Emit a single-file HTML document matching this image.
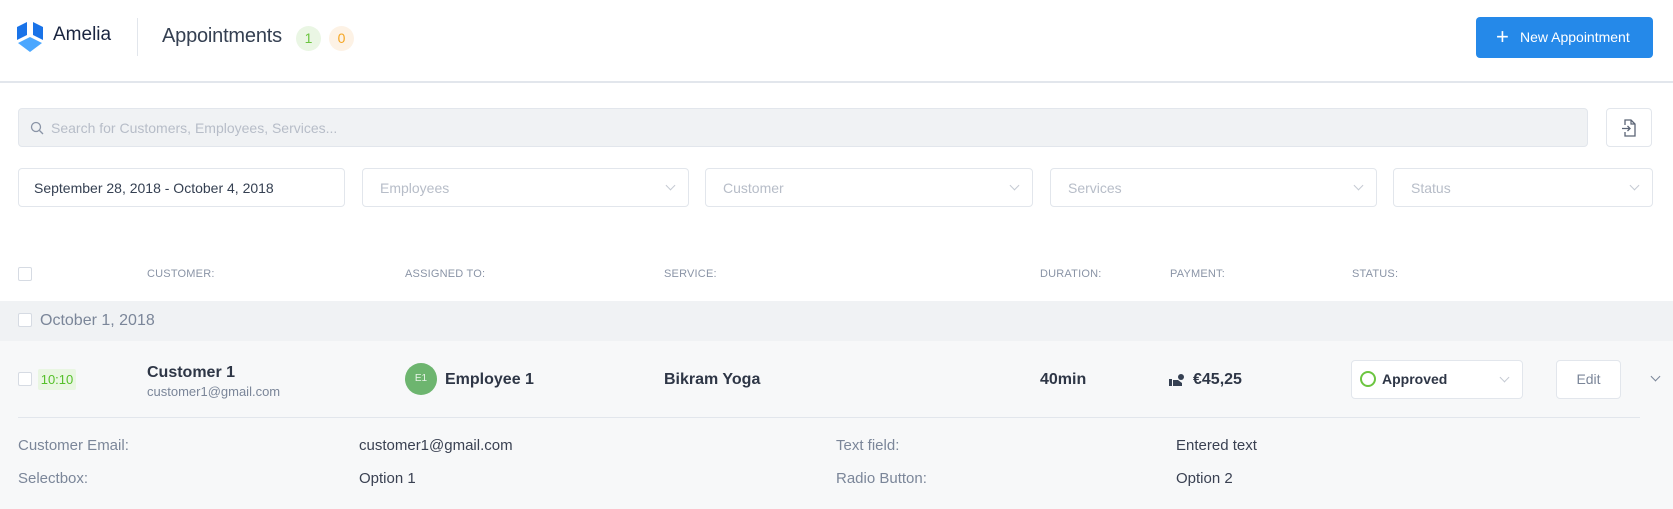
<!DOCTYPE html>
<html><head><meta charset="utf-8"><style>
*{box-sizing:border-box;margin:0;padding:0}
body{width:1673px;height:509px;overflow:hidden;background:#fff;font-family:"Liberation Sans",Arial,sans-serif;position:relative;color:#354052}
.a{position:absolute}
.box{position:absolute;border:1px solid #e2e6ec;border-radius:4px;background:#fff;height:39px;top:168px}
.ph{position:absolute;left:17px;top:11px;font-size:14px;color:#b7bdc8}
.chev{position:absolute;right:14px;top:13px;width:7px;height:7px;border-right:1px solid #c5cad3;border-bottom:1px solid #c5cad3;transform:rotate(45deg)}
.th{position:absolute;top:268px;font-size:11px;color:#8a94a6;letter-spacing:.2px}
.cb{position:absolute;width:14px;height:14px;border:1px solid #d6dbe3;border-radius:2px;background:#fff}
.lab{position:absolute;font-size:15px;color:#7b8699}
.val{position:absolute;font-size:15px;color:#3a4152}
</style></head><body>
<svg class="a" style="left:17px;top:22px" width="26" height="31" viewBox="0 0 26 31">
<path d="M0 5 L10 0 L10 13 L0 18 Z" fill="#1a73e8"/><path d="M26 5 L16 0 L16 13 L26 18 Z" fill="#1a73e8"/>
<path d="M1 21 L13 15 L25 21 L13 30 Z" fill="#4aa7ff"/></svg>
<div class="a" style="left:53px;top:24px;font-size:19px;color:#1a2540">Amelia</div>
<div class="a" style="left:137px;top:18px;width:1px;height:38px;background:#e2e6ec"></div>
<div class="a" style="left:162px;top:25px;font-size:20px;color:#354052;letter-spacing:-0.2px">Appointments</div>
<div class="a" style="left:296px;top:26px;width:25px;height:25px;border-radius:50%;background:#eaf6e4;color:#6cc540;font-size:14px;text-align:center;line-height:25px">1</div>
<div class="a" style="left:329px;top:26px;width:25px;height:25px;border-radius:50%;background:#fdf2e5;color:#f5a623;font-size:14px;text-align:center;line-height:25px">0</div>
<div class="a" style="left:1476px;top:17px;width:177px;height:41px;border-radius:4px;background:#2589e9;color:#fff;font-size:14px;line-height:41px"><span style="position:absolute;left:20px;top:-1px;font-size:22px;font-weight:300">+</span><span style="position:absolute;left:44px">New Appointment</span></div>
<div class="a" style="left:0;top:81px;width:1673px;height:2px;background:#e2e6ec"></div>
<div class="a" style="left:18px;top:108px;width:1570px;height:39px;background:#f0f2f4;border:1px solid #e2e6ec;border-radius:4px">
<svg class="a" style="left:11px;top:12px" width="14" height="14" viewBox="0 0 14 14"><circle cx="6" cy="6" r="4.5" fill="none" stroke="#8a94a6" stroke-width="1.3"/><path d="M9.5 9.5 L13 13" stroke="#8a94a6" stroke-width="1.3"/></svg>
<span class="a" style="left:32px;top:11px;font-size:14px;color:#b7bdc8">Search for Customers, Employees, Services...</span></div>
<div class="a" style="left:1606px;top:108px;width:46px;height:39px;border:1px solid #e2e6ec;border-radius:4px;background:#fff">
<svg class="a" style="left:14px;top:10px" width="16" height="18" viewBox="0 0 16 18"><path d="M4 6 V1 H10 L14 5 V17 H4 V13" fill="none" stroke="#5b6475" stroke-width="1.3"/><path d="M10 1 V5 H14" fill="none" stroke="#5b6475" stroke-width="1.2"/><path d="M1 9.5 H9 M6.5 7 L9 9.5 L6.5 12" fill="none" stroke="#5b6475" stroke-width="1.3"/></svg></div>
<div class="box" style="left:18px;width:327px"><span class="ph" style="left:15px;color:#354052">September 28, 2018 - October 4, 2018</span></div>
<div class="box" style="left:362px;width:327px"><span class="ph">Employees</span><i class="chev"></i></div>
<div class="box" style="left:705px;width:328px"><span class="ph">Customer</span><i class="chev"></i></div>
<div class="box" style="left:1050px;width:327px"><span class="ph">Services</span><i class="chev"></i></div>
<div class="box" style="left:1393px;width:260px"><span class="ph">Status</span><i class="chev"></i></div>
<div class="cb" style="left:18px;top:267px"></div>
<div class="th" style="left:147px">CUSTOMER:</div>
<div class="th" style="left:405px">ASSIGNED TO:</div>
<div class="th" style="left:664px">SERVICE:</div>
<div class="th" style="left:1040px">DURATION:</div>
<div class="th" style="left:1170px">PAYMENT:</div>
<div class="th" style="left:1352px">STATUS:</div>
<div class="a" style="left:0;top:301px;width:1673px;height:40px;background:#f0f2f4"></div>
<div class="cb" style="left:18px;top:313px"></div>
<div class="a" style="left:40px;top:312px;font-size:16px;color:#7b8699">October 1, 2018</div>
<div class="a" style="left:0;top:341px;width:1673px;height:168px;background:#f7f8f9"></div>
<div class="cb" style="left:18px;top:372px"></div>
<div class="a" style="left:38px;top:369px;width:38px;height:21px;background:#e9f6e2;border-radius:2px;color:#55c02a;font-size:13px;line-height:21px;text-align:center">10:10</div>
<div class="a" style="left:147px;top:364px;font-size:16px;font-weight:bold;color:#2e3646">Customer 1</div>
<div class="a" style="left:147px;top:384px;font-size:13px;color:#7b8699">customer1@gmail.com</div>
<div class="a" style="left:405px;top:363px;width:32px;height:32px;border-radius:50%;background:#6db56f;color:#eaf5ea;font-size:10px;line-height:32px;text-align:center">E1</div>
<div class="a" style="left:445px;top:371px;font-size:16px;color:#2e3646;font-weight:bold">Employee 1</div>
<div class="a" style="left:664px;top:371px;font-size:16px;color:#2e3646;font-weight:bold">Bikram Yoga</div>
<div class="a" style="left:1040px;top:371px;font-size:16px;color:#2e3646;font-weight:bold">40min</div>
<svg class="a" style="left:1169px;top:374px" width="17" height="12" viewBox="0 0 17 12"><rect x="0" y="5" width="3" height="7" fill="#354052"/><path d="M4 6 H9 L13 9 V12 H4 Z" fill="#354052"/><circle cx="12" cy="3" r="3" fill="#354052"/></svg>
<div class="a" style="left:1193px;top:371px;font-size:16px;color:#2e3646;font-weight:bold">€45,25</div>
<div class="a" style="left:1351px;top:360px;width:172px;height:39px;background:#fff;border:1px solid #e2e6ec;border-radius:4px">
<span class="a" style="left:8px;top:10px;width:16px;height:16px;border:2px solid #6cc540;border-radius:50%"></span>
<span class="a" style="left:30px;top:10px;font-size:14px;color:#2e3646;font-weight:bold">Approved</span><i class="chev" style="right:14px"></i></div>
<div class="a" style="left:1556px;top:360px;width:65px;height:39px;background:#fff;border:1px solid #e2e6ec;border-radius:4px;text-align:center;line-height:37px;font-size:14px;color:#7b8699">Edit</div>
<i class="a" style="left:1652px;top:373px;width:7px;height:7px;border-right:1px solid #7b8699;border-bottom:1px solid #7b8699;transform:rotate(45deg)"></i>
<div class="a" style="left:18px;top:417px;width:1622px;height:1px;background:#e2e6ec"></div>
<div class="lab" style="left:18px;top:437px">Customer Email:</div>
<div class="val" style="left:359px;top:437px">customer1@gmail.com</div>
<div class="lab" style="left:836px;top:437px">Text field:</div>
<div class="val" style="left:1176px;top:437px">Entered text</div>
<div class="lab" style="left:18px;top:470px">Selectbox:</div>
<div class="val" style="left:359px;top:470px">Option 1</div>
<div class="lab" style="left:836px;top:470px">Radio Button:</div>
<div class="val" style="left:1176px;top:470px">Option 2</div>
</body></html>
